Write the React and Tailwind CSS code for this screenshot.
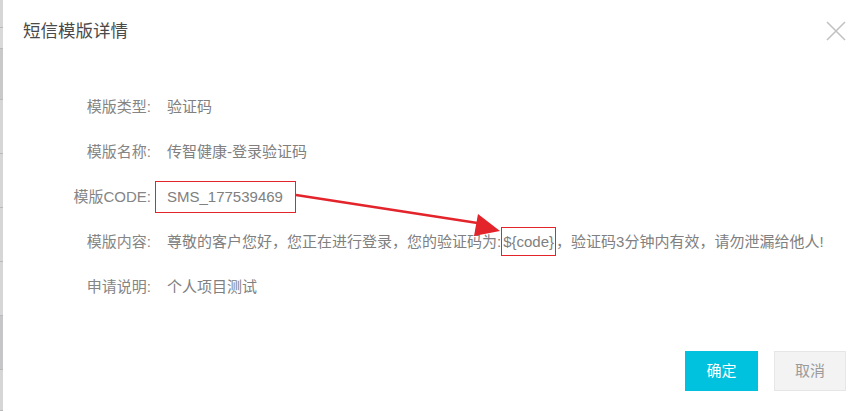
import React from "react";

const font = { fontFamily: '"Liberation Sans", "Noto Sans CJK SC", sans-serif' };

const rows = [
  { label: "模版类型:", value: "验证码" },
  { label: "模版名称:", value: "传智健康-登录验证码" },
  { label: "模版CODE:", value: "SMS_177539469", boxed: true },
  { label: "模版内容:", value: "content" },
  { label: "申请说明:", value: "个人项目测试" },
];

const stripes = [
  { h: 28, c: "bg-[#d6d6d6]" },
  { h: 21, c: "bg-[#d9d9d9]" },
  { h: 51, c: "bg-[#c9c9c9]" },
  { h: 54, c: "bg-[#d6d6d6]" },
  { h: 54, c: "bg-[#d6d6d6]" },
  { h: 54, c: "bg-[#d6d6d6]" },
  { h: 54, c: "bg-[#d6d6d6]" },
  { h: 54, c: "bg-[#c6c6c9]" },
  { h: 41, c: "bg-[#d6d6d6]" },
];

const App = () => {
  return (
    <div className="w-[864px] h-[411px] flex bg-white overflow-hidden" style={font}>
      <div className="w-[3px] flex flex-col shrink-0">
        {stripes.map((s, i) => (
          <div
            key={i}
            className={`${s.c} border-b border-[#b9b9b9] shrink-0`}
            style={{ height: s.h }}
          />
        ))}
      </div>

      <div className="relative flex-1 flex flex-col">
        <div className="h-[64px] flex items-center justify-between pl-[20px] pr-[18px]">
          <span className="text-[17.5px] text-[#4a4a4a] leading-none">短信模版详情</span>
          <svg width="20" height="20" viewBox="0 0 20 20" className="-mt-[3px]">
            <path d="M1 1 L19 19 M19 1 L1 19" stroke="#c2c2c2" strokeWidth="1.6" fill="none" />
          </svg>
        </div>

        <div className="mt-[20px] flex flex-col">
          {rows.map((r) => (
            <div key={r.label} className="h-[45px] flex items-center text-[15px] leading-none">
              <div className="w-[148px] text-right text-[#858585]">{r.label}</div>
              {r.boxed ? (
                <div className="ml-[4px] h-[32px] w-[141px] border border-[#e3242b] flex items-center pl-[11px] text-[#808080]">
                  {r.value}
                </div>
              ) : r.value === "content" ? (
                <div className="ml-[16px] text-[#808080] flex items-center whitespace-nowrap">
                  <span>尊敬的客户您好，您正在进行登录，您的验证码为:</span>
                  <span className="h-[29px] px-[1px] border border-[#e3242b] flex items-center -mt-[1px]">
                    {"${code}"}
                  </span>
                  <span>，验证码3分钟内有效，请勿泄漏给他人!</span>
                </div>
              ) : (
                <div className="ml-[16px] text-[#808080]">{r.value}</div>
              )}
            </div>
          ))}
        </div>

        <div className="mt-[42px] flex justify-end gap-[16px] pr-[18px]">
          <button className="w-[73px] h-[40px] bg-[#00c1de] text-white text-[15px]">确定</button>
          <button className="w-[72px] h-[40px] bg-[#f3f3f3] border border-[#e6e6e6] text-[#9a9a9a] text-[15px]">
            取消
          </button>
        </div>

        <svg
          className="absolute left-0 top-0 pointer-events-none"
          width="861"
          height="411"
          viewBox="3 0 861 411"
        >
          <line x1="296" y1="195" x2="484" y2="224" stroke="#e3242b" strokeWidth="2.5" />
          <polygon points="500,231 478,214 474,236" fill="#e3242b" />
        </svg>
      </div>
    </div>
  );
};

export default App;
